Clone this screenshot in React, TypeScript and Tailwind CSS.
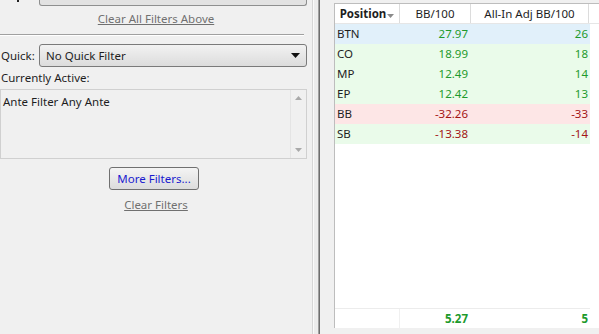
import React from "react";

type Row = { pos: string; bb: string; adj: string; tone: "blue" | "green" | "red"; neg: boolean };

const rows: Row[] = [
  { pos: "BTN", bb: "27.97", adj: "26", tone: "blue", neg: false },
  { pos: "CO", bb: "18.99", adj: "18", tone: "green", neg: false },
  { pos: "MP", bb: "12.49", adj: "14", tone: "green", neg: false },
  { pos: "EP", bb: "12.42", adj: "13", tone: "green", neg: false },
  { pos: "BB", bb: "-32.26", adj: "-33", tone: "red", neg: true },
  { pos: "SB", bb: "-13.38", adj: "-14", tone: "green", neg: true },
];

const rowBg = {
  blue: "bg-[#e1f0fa]",
  green: "bg-[#eafbea]",
  red: "bg-[#fde6e6]",
};

function Caret() {
  return (
    <svg width="9" height="5" viewBox="0 0 9 5" className="shrink-0">
      <path d="M0 0h9L4.5 5z" fill="#111" />
    </svg>
  );
}

function LeftPanel() {
  return (
    <div className="w-[312px] shrink-0 flex flex-col text-[11.5px] text-[#1e1e1e]">
      {/* cut-off control at top */}
      <div className="h-[6px] flex items-end relative">
        <span className="absolute left-[17px] top-0 w-[2px] h-[2px] bg-[#222]" />
        <div className="ml-[39px] w-[268px] h-[6px] border border-t-0 border-[#8e8f8f] rounded-b-[3px] bg-[#e2e2e2]" />
      </div>
      <div className="h-[26px] flex items-center justify-center">
        <span className="underline text-[#707070]">Clear All Filters Above</span>
      </div>
      <div className="h-px w-[304px] bg-[#a0a0a0] mt-[2px]" />
      <div className="h-px w-[304px] bg-white" />
      <div className="flex items-center mt-[8px] h-[23px]">
        <span className="w-[39px] pl-[1px]">Quick:</span>
        <div className="w-[268px] h-[23px] border border-[#7a7a7a] rounded-[3px] bg-gradient-to-b from-[#f2f2f2] to-[#dcdcdc] flex items-center justify-between pl-[6px] pr-[6px]">
          <span>No Quick Filter</span>
          <Caret />
        </div>
      </div>
      <div className="h-[22px] flex items-center pl-[1px]">Currently Active:</div>
      <div className="w-[307px] h-[70px] border border-[#d0d0d0] bg-[#f0f0f0] flex">
        <div className="flex-1 pl-[2px] pt-[3px]">Ante Filter Any Ante</div>
        <div className="w-[16px] border-l border-[#e4e4e4] flex flex-col items-center justify-between py-[6px]">
          <svg width="7" height="4" viewBox="0 0 7 4">
            <path d="M3.5 0L7 4H0z" fill="#a9a9a9" />
          </svg>
          <svg width="7" height="4" viewBox="0 0 7 4">
            <path d="M0 0h7L3.5 4z" fill="#a9a9a9" />
          </svg>
        </div>
      </div>
      <div className="flex justify-center mt-[8px]">
        <div className="w-[90px] h-[23px] ml-[-4px] border border-[#707070] rounded-[3px] bg-gradient-to-b from-[#f4f4f4] to-[#dcdcdc] flex items-center justify-center text-[#1a1ad0]">
          More Filters...
        </div>
      </div>
      <div className="flex justify-center mt-[6px] h-[18px] items-center">
        <span className="underline text-[#707070]">Clear Filters</span>
      </div>
    </div>
  );
}

function Splitter() {
  return (
    <div className="w-[8px] shrink-0 flex">
      <div className="w-px bg-[#d6d6d6]" />
      <div className="w-px bg-[#fafafa]" />
      <div className="w-[4px] bg-[#ececec]" />
      <div className="w-px bg-[#a0a0a0]" />
      <div className="w-px bg-[#6e6e6e]" />
    </div>
  );
}

function Table() {
  return (
    <div className="flex-1 flex flex-col pt-[3px] pl-[14px] pb-[6px]">
      <div className="flex-1 flex flex-col bg-white border-l border-t border-[#bdbdbd] text-[11.5px]">
        <div className="flex h-[20px] border-b border-[#e6e6e6] text-[#1e1e1e]">
          <div className="w-[65px] flex items-center justify-center gap-[1px] font-bold border-r border-[#dcdcdc]">
            Position
            <svg width="7" height="4" viewBox="0 0 7 4" className="mt-[4px]">
              <path d="M0 0h7L3.5 4z" fill="#8a8a8a" />
            </svg>
          </div>
          <div className="w-[71px] flex items-center justify-center border-r border-[#dcdcdc]">BB/100</div>
          <div className="w-[118px] flex items-center justify-center border-r border-[#dcdcdc]">All-In Adj BB/100</div>
        </div>
        {rows.map((r) => {
          const c = r.neg ? "text-[#a31515]" : "text-[#1e9a2c]";
          return (
            <div key={r.pos} className={`flex h-[20px] w-[255px] items-center ${rowBg[r.tone]}`}>
              <div className="w-[65px] pl-[2px] text-[#1e1e1e]">{r.pos}</div>
              <div className={`w-[71px] text-right pr-[3px] ${c}`}>{r.bb}</div>
              <div className={`w-[118px] text-right pr-[1px] ${c}`}>{r.adj}</div>
            </div>
          );
        })}
        <div className="flex-1" />
        <div className="flex h-[20px] w-[255px] border-t border-[#ececec] font-bold text-[#1e9a2c]">
          <div className="w-[65px] border-r border-[#f0f0f0]" />
          <div className="w-[71px] text-right pr-[3px] flex items-center justify-end">5.27</div>
          <div className="w-[118px] text-right pr-[1px] flex items-center justify-end">5</div>
        </div>
      </div>
    </div>
  );
}

export default function App() {
  return (
    <div
      className="w-[599px] h-[334px] flex bg-[#f0f0f0] overflow-hidden"
      style={{ fontFamily: '"Noto Sans", "Open Sans", sans-serif' }}
    >
      <LeftPanel />
      <Splitter />
      <Table />
    </div>
  );
}
